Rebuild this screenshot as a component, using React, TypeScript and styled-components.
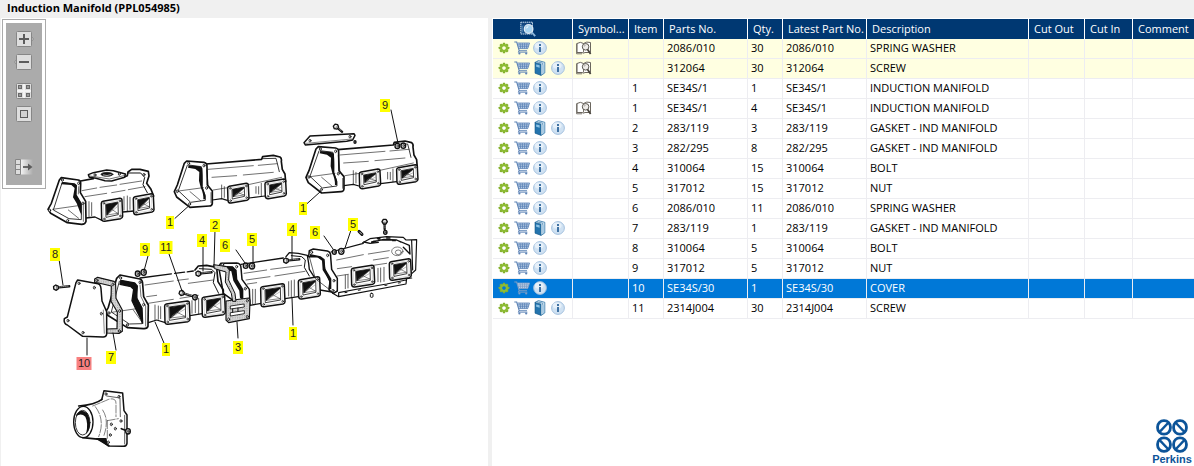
import React from 'react';
import styled, { createGlobalStyle, css } from 'styled-components';

const GlobalStyle = createGlobalStyle`
  * { box-sizing: border-box; }
  body {
    margin: 0;
    background: #f0f0f0;
    color: #000;
    font-family: "Open Sans", "Noto Sans", sans-serif;
    font-size: 11px;
  }
`;

const Page = styled.div`
  display: flex;
  flex-direction: column;
  min-height: 100vh;
`;

const TitleBar = styled.h1`
  margin: 0;
  padding-left: 7px;
  height: 18px;
  font-size: 11px;
  line-height: 16px;
  font-weight: 700;
`;

const Split = styled.main`
  flex: 1;
  display: grid;
  grid-template-columns: 487px minmax(0, 1fr);
  column-gap: 4px;
  padding-left: 1px;
`;

const DrawingPane = styled.section`
  display: flex;
  align-items: flex-start;
  background: #fff;
  padding-left: 1px;
`;

const ToolFrame = styled.div`
  flex: none;
  margin-top: 1px;
  padding: 3px;
  border: 1px solid #ababab;
  background: #fff;
`;

const Tools = styled.div`
  width: 36px;
  padding: 8px 0 10px;
  background: #ababab;
  display: flex;
  flex-direction: column;
  align-items: center;
  gap: 7px;
`;

const ToolButton = styled.button<{ $before?: number }>`
  display: block;
  border: 0;
  padding: 0;
  background: none;
  width: 20px;
  height: 16px;
  margin-top: ${(p) => p.$before ?? 0}px;
  svg { display: block; }
`;

const Drawing = styled.svg`
  display: block;
  flex: none;
  width: 442px;
  height: 448px;
  stroke-linejoin: round;
  stroke-linecap: round;
  font-family: "Liberation Sans", Arial, sans-serif;
`;

const ListPane = styled.section`
  background: #fff;
  padding: 1px 0 0 1px;
  display: flex;
  flex-direction: column;
  justify-content: space-between;
`;

const PartsTable = styled.table`
  width: 100%;
  table-layout: fixed;
  border-collapse: separate;
  border-spacing: 0;
`;

const Col = styled.col<{ $w?: number }>`
  width: ${(p) => (p.$w ? `${p.$w}px` : 'auto')};
`;

const HeadCell = styled.th`
  height: 20px;
  padding: 0 0 0 5px;
  background: #003872;
  color: #fff;
  font-weight: 400;
  text-align: left;
  line-height: 20px;
  white-space: nowrap;
  overflow: hidden;
  border-right: 1px solid #fff;
  &:last-child { border-right: 0; }
`;

const IconHeadCell = styled(HeadCell)`
  padding: 0 0 0 27px;
  svg { display: block; }
`;

const Cell = styled.td`
  height: 20px;
  padding: 0 0 0 3px;
  line-height: 18px;
  vertical-align: top;
  white-space: nowrap;
  overflow: hidden;
  border-right: 1px solid #ededf1;
  border-bottom: 1px solid #ededf1;
  &:last-child { border-right: 0; }
`;

const Row = styled.tr<{ $tone: 'plain' | 'marked' | 'selected' }>`
  ${(p) => p.$tone === 'marked' && css`background: #ffffe1;`}
  ${(p) => p.$tone === 'selected' && css`background: #0078d7; color: #fff;`}
`;

const ActionCell = styled(Cell)`
  padding-left: 2px;
`;

const Actions = styled.div`
  display: flex;
`;

const IconButton = styled.button`
  display: flex;
  align-items: center;
  justify-content: center;
  width: 18px;
  height: 18px;
  border: 0;
  padding: 0;
  background: none;
`;

const Brand = styled.footer`
  align-self: flex-end;
  width: 44px;
  padding-bottom: 1px;
  display: flex;
  flex-direction: column;
  align-items: center;
  color: #0c5499;
  font: 700 11px/12px "Liberation Sans", Arial, sans-serif;
`;

/* ---------- small icons ---------- */

const GearIcon = () => (
  <svg width="12" height="12" viewBox="-6 -6 12 12">
    {[0, 45, 90, 135, 180, 225, 270, 315].map((a) => (
      <rect key={a} x="-1.2" y="-5.3" width="2.4" height="2.4" rx="0.4" fill="#84b02c" transform={`rotate(${a})`} />
    ))}
    <circle r="2.9" fill="none" stroke="#8dbb33" strokeWidth="2.2" />
  </svg>
);

const CartIcon = ({ pale }: { pale?: boolean }) => {
  const ink = pale ? '#7d9dc4' : '#5b82b5';
  return (
    <svg width="16" height="14" viewBox="0 0 16 14" fill="none">
      <path d="M3.2 2h12.400l-1.900 5.600H4.900z" fill="#c3d6eb" />
      <path d="M3.400 2h12.200M4 3.900h11M4.500 5.700h10M4.900 7.600h9M6 2l.7 5.600M8.300 2l.3 5.600M10.700 2l-.2 5.600M13 2l-.7 5.600M15.600 2l-1.900 5.600" stroke={ink} strokeWidth="0.8" />
      <path d="M.3 1h2.400l2.500 8.700h7.800" stroke={ink} strokeWidth="1.1" />
      <path d="M5.200 9.700l-1 1.500h9.200" stroke={ink} strokeWidth="0.9" />
      <circle cx="5.400" cy="12.500" r="1.1" fill={ink} />
      <circle cx="12.200" cy="12.500" r="1.1" fill={ink} />
    </svg>
  );
};

const BookIcon = () => (
  <svg width="12" height="16" viewBox="0 0 12 16">
    <path d="M1 2.400L4.400 .6l6.400 1.700v10.600L7.200 15.400z" fill="#e4f0f8" stroke="#2f75a8" strokeWidth="0.8" />
    <path d="M3 1.800l5.800 1.400v2" fill="none" stroke="#2f75a8" strokeWidth="0.7" />
    <path d="M1 2.400l6 1.700v11.300L1 13.200z" fill="#2474ad" stroke="#155787" strokeWidth="0.6" />
    <path d="M2.200 4.400l3.400.9v2.400l-3.400-.9z" fill="#8cc3e6" />
    <path d="M9 5.200v8.600" stroke="#4b93c4" strokeWidth="0.8" />
  </svg>
);

const InfoIcon = () => (
  <svg width="14" height="14" viewBox="0 0 14 14">
    <circle cx="7" cy="7" r="6.400" fill="#cfe1f2" stroke="#9dbcdb" strokeWidth="0.9" />
    <ellipse cx="6.200" cy="4.600" rx="4.400" ry="3.200" fill="#e6f0f9" />
    <rect x="6" y="3" width="2" height="2" fill="#3f72a3" />
    <path d="M6 6h2v5H6z" fill="#3f72a3" />
  </svg>
);

const SymbolIcon = () => (
  <svg width="16" height="14" viewBox="0 0 16 14" fill="none">
    <path d="M1 2.500Q4.500 .2 7.500 2.500Q10.500 .2 14.500 1.500V11.500H9Q7.500 12.800 6 11.500H1z" fill="#fff" stroke="#6b665e" />
    <path d="M.6 2.500v10.300h5.400M7.500 2.500v9" stroke="#6b665e" strokeWidth="0.9" />
    <circle cx="9.600" cy="5.800" r="3.300" fill="#efedea" stroke="#5a564f" strokeWidth="1" />
    <path d="M8.200 5.600a1.600 1.600 0 0 1 1.500-1.500" stroke="#8a857c" strokeWidth="0.7" />
    <path d="M11.600 8.600l3 4.400" stroke="#47433c" strokeWidth="1.800" />
  </svg>
);

const SearchListIcon = () => (
  <svg width="16" height="16" viewBox="0 0 16 16" fill="none">
    <path d="M.8 1.200h11.700v11.800H.8z" fill="#1d568f" stroke="#c9d9e8" strokeDasharray="1.4 0.6" />
    <path d="M2 3h10" stroke="#0f3f73" strokeWidth="1.2" />
    <path d="M2.200 5.500v6" stroke="#8bb0d3" strokeDasharray="1 1" />
    <circle cx="8.600" cy="8" r="4.300" fill="#a9d4f0" stroke="#e2ecf4" strokeWidth="1.2" />
    <path d="M6.300 7.400a2.400 2.400 0 0 1 2-1.700" stroke="#fff" />
    <path d="M11.800 11.400l3.400 3.800" stroke="#8cb7dc" strokeWidth="1.800" />
  </svg>
);

const ToolFace = () => <rect x="2.5" y="0.5" width="15" height="15" rx="1" fill="#dedede" stroke="#868686" />;

const ZoomInIcon = () => (
  <svg width="20" height="16" viewBox="0 0 20 16" fill="none">
    <path d="M17 5l2.400 3L17 11" fill="#dedede" stroke="#868686" />
    <ToolFace />
    <path d="M10 3v10M5 8h10" stroke="#5c5c5c" strokeWidth="2" />
  </svg>
);

const ZoomOutIcon = () => (
  <svg width="20" height="16" viewBox="0 0 20 16" fill="none">
    <path d="M3 5L.6 8 3 11" fill="#dedede" stroke="#868686" />
    <ToolFace />
    <path d="M5 8h10" stroke="#5c5c5c" strokeWidth="2" />
  </svg>
);

const TilesIcon = () => (
  <svg width="20" height="16" viewBox="0 0 20 16">
    <ToolFace />
    <path d="M10 1v14M3 8h14" stroke="#f4f4f4" strokeWidth="2" />
    <g fill="#999" stroke="#6a6a6a">
      <rect x="4.5" y="2.5" width="3" height="3" />
      <rect x="12.5" y="2.5" width="3" height="3" />
      <rect x="4.5" y="10.5" width="3" height="3" />
      <rect x="12.5" y="10.5" width="3" height="3" />
    </g>
  </svg>
);

const FitIcon = () => (
  <svg width="20" height="16" viewBox="0 0 20 16">
    <ToolFace />
    <rect x="6.5" y="4.5" width="7" height="7" fill="#d2d2d2" stroke="#5c5c5c" />
  </svg>
);

const ExportIcon = () => (
  <svg width="20" height="16" viewBox="0 0 20 16" fill="none">
    <defs>
      <linearGradient id="fade">
        <stop offset="0" stopColor="#f2f2f2" />
        <stop offset="1" stopColor="#ababab" />
      </linearGradient>
    </defs>
    <path d="M7 .5h12v15H7z" fill="url(#fade)" />
    <path d="M1.5 .5h5v15h-5zM1.5 5.5h5M1.500 10.5h5" fill="#dcdcdc" stroke="#868686" />
    <path d="M9 8h6" stroke="#5c5c5c" strokeWidth="1.800" />
    <path d="M14 4.500L18.500 8 14 11.500z" fill="#5c5c5c" />
  </svg>
);

const PerkinsMark = () => (
  <svg width="32" height="34" viewBox="-16 -17 32 34" fill="none" stroke="#0c5499" strokeWidth="2.8">
    {[[1, 1], [-1, 1], [1, -1], [-1, -1]].map(([sx, sy]) => (
      <g key={`${sx}${sy}`} transform={`scale(${sx} ${sy})`}>
        <rect x="1.600" y="1.800" width="12.800" height="13.600" rx="6.200" />
        <path d="M3.500 13.500L12.800 3.700" strokeWidth="2.400" />
      </g>
    ))}
  </svg>
);

/* ---------- exploded view ---------- */

const INK = '#111';

type PortProps = { x: number; y: number; w?: number; h?: number };

const Port = ({ x, y, w = 62, h = 56 }: PortProps) => (
  <g transform={`translate(${x} ${y})`}>
    <path
      d={`M5 9L${w - 6} 0Q${w} 0 ${w} 6L${w + 2} ${h - 12}Q${w + 2} ${h - 7} ${w - 4} ${h - 5}L10 ${h + 3}Q2 ${h + 4} 1 ${h - 4}L0 15Q0 10 5 9Z`}
      fill="#fff" stroke={INK} strokeWidth="4.5"
    />
    <path d={`M7 14L${w - 6} 6L${w - 4} ${h - 10}L9 ${h - 2}Z`} fill="none" stroke="#aaa" strokeWidth="1.2" />
    <path d={`M14 18L${w - 12} 11L${w - 11} ${h - 17}L15 ${h - 9}Z`} fill="#fff" stroke={INK} strokeWidth="2.4" />
    <path d={`M16 20L${w - 14} 14L${w / 2} ${h / 2}L17 ${h - 17}Z`} fill={INK} />
    <path d={`M22 ${h - 22}L${w - 18} 20M20 ${h - 18}L${w - 14} 25`} stroke="#777" strokeWidth="1.5" />
    <path d={`M17 ${h - 16}L${w - 13} ${h - 21}M${w / 2} ${h / 2}L${w - 13} ${h - 21}`} stroke={INK} strokeWidth="1.5" />
    {[[8, 15], [w - 6, 8], [9, h - 4], [w - 5, h - 13]].map(([cx, cy]) => (
      <circle key={`${cx}-${cy}`} cx={cx} cy={cy} r="2.5" fill="#fff" stroke={INK} strokeWidth="2" />
    ))}
  </g>
);

const Hole = ({ x, y }: { x: number; y: number }) => (
  <ellipse cx={x} cy={y} rx="3" ry="4" fill="#fff" stroke={INK} strokeWidth="2.5" />
);

const Bolt = ({ x, y, len = 38, angle = 0 }: { x: number; y: number; len?: number; angle?: number }) => (
  <g transform={`translate(${x} ${y}) rotate(${angle})`} stroke={INK}>
    <path d={`M8 0H${len}`} strokeWidth="7" />
    <path d={`M10 -1H${len - 2}`} stroke="#bbb" strokeWidth="2" strokeDasharray="3 3" />
    <path d="M-7 -4L0 -8L7 -4V4L0 8L-7 4Z" fill="#e8e8e8" strokeWidth="4" />
    <path d="M2 -7V7" strokeWidth="1.5" />
  </g>
);

const Washer = ({ x, y, r = 8 }: { x: number; y: number; r?: number }) => (
  <g fill="#ddd" stroke={INK}>
    <ellipse cx={x} cy={y} rx={r} ry={r + 1} strokeWidth="4" />
    <ellipse cx={x + 1} cy={y} rx={r / 3} ry={r / 2} strokeWidth="2" />
  </g>
);

const LongManifold = () => (
  <g fill="none" stroke={INK} strokeWidth="4">
    <path d="M498 222L665 208L668 199L700 196L720 201Q726 205 724 214L727 238L735 252L739 280L675 320L545 328L516 332Z" fill="#fff" stroke="none" />
    <path d="M498 222L665 208L668 200L700 196L720 201Q726 205 724 214L727 238L735 252L737 275" strokeWidth="5" />
    <path d="M668 206L708 205L712 220L718 245" strokeWidth="2.5" />
    <path d="M505 238L640 227M655 226L712 221M516 262L590 257M610 255L700 247M520 300L570 292M625 284L725 262" strokeWidth="1.8" />
    <path d="M545 285V326M553 290V322M648 290V310M656 290V312M664 280V318" strokeWidth="2" />
    <path d="M517 330L545 326L562 331M627 324L675 318" strokeWidth="3.5" />
    <path d="M440 213L492 217Q502 219 501 230L502 285L517 303V340Q516 348 508 348L450 352L410 321L403 305L412 285L433 220Z" fill="#fff" strokeWidth="5" />
    <path d="M446 225L484 230Q488 250 486 290L496 318V331L452 337L415 302L442 226" strokeWidth="2.5" />
    <path d="M446 226L478 229L487 234L488 292L496 314V328L490 328Q491 312 482 292L477 272L478 246L466 237L444 233Z" fill={INK} stroke="none" />
    <path d="M416 303L490 293M450 305L482 332M500 240L505 290M513 308V338" strokeWidth="1.8" />
    <Hole x={446} y={220} /><Hole x={492} y={227} /><Hole x={412} y={304} /><Hole x={449} y={342} /><Hole x={500} y={294} />
    <Port x={563} y={280} w={62} h={56} />
    <Port x={675} y={267} w={62} h={56} />
    <path d="M445 349L405 385" strokeWidth="3" />
  </g>
);

const BossManifold = () => (
  <g fill="none" stroke={INK} strokeWidth="4">
    <path d="M122 273L150 266L262 250L270 238L325 246L330 290L342 320L284 365L185 385L137 385Z" fill="#fff" stroke="none" />
    <path d="M122 273L160 266M250 262L262 257L264 246L275 238L300 238L325 244L327 258L320 280L333 298L341 318" strokeWidth="5" />
    <path d="M266 249L302 249L314 262L309 284L322 308" strokeWidth="3" />
    <path d="M126 302L170 294M180 292L230 285M240 283L305 273M135 320L200 310M215 308L255 301M265 299L315 290" strokeWidth="1.8" />
    <path d="M147 335V380M155 338V377M252 320V360M262 318V364M270 322V358" strokeWidth="2" />
    <path d="M138 384L165 381L186 391M248 366L282 363" strokeWidth="4" />
    <path d="M145 254L160 248L200 240L220 242L256 252L254 262L215 273L195 272L168 265L148 262Z" fill="#fff" strokeWidth="4.5" />
    <ellipse cx="201" cy="253" rx="18" ry="6" fill={INK} strokeWidth="2" />
    <path d="M190 255Q201 259 213 254" stroke="#fff" strokeWidth="2" />
    <path d="M148 258L170 261L208 267L252 257" strokeWidth="1.8" />
    <Hole x={312} y={254} /><Hole x={165} y={255} /><Hole x={238} y={252} />
    <path d="M64 263L115 270Q123 272 122 282L121 308L137 334L138 394Q136 403 125 403L82 398L32 370L24 358L34 340L58 270Z" fill="#fff" strokeWidth="5" />
    <path d="M68 277L106 284L107 315L124 342V389L87 386L40 360L66 279" strokeWidth="2.5" />
    <path d="M66 276L104 280L111 286L110 314L125 340V376L120 366L110 340L99 322L104 294L94 285L64 283Z" fill={INK} stroke="none" />
    <path d="M38 358L115 347M85 360L116 385M130 340V394M116 290L115 312" strokeWidth="1.8" />
    <Hole x={67} y={270} /><Hole x={116} y={280} /><Hole x={29} y={361} /><Hole x={83} y={392} /><Hole x={129} y={340} />
    <Port x={184} y={325} w={62} h={66} />
    <Port x={280} y={311} w={60} h={60} />
  </g>
);

const CoverAndFirstManifold = () => (
  <g fill="none" stroke={INK} strokeWidth="4">
    {/* body of the first manifold */}
    <path d="M300 144L460 123" strokeWidth="4" strokeDasharray="95 10 30 8" />
    <path d="M465 120L475 108L500 106L530 112L534 155L550 180V195" strokeWidth="5" />
    <path d="M478 116L515 118L525 128L520 158L536 190" strokeWidth="3" />
    <path d="M315 165L400 153M412 151L445 147M325 220L400 208M420 205L475 196M320 200L350 196M445 160L520 150" strokeWidth="1.8" />
    <path d="M345 225V270M355 228V268M362 230V266M456 212V250M466 210V248M476 205V252" strokeWidth="2" />
    <path d="M325 278L350 270L376 278M450 257L487 251" strokeWidth="3.5" />
    {/* flange */}
    <path d="M240 135L300 147Q308 150 308 162L311 200L325 225L324 289Q322 297 310 296L262 293L203 256L197 246L205 232L230 145Z" fill="#fff" strokeWidth="5" />
    <path d="M241 152L286 161L291 205L305 235L306 281L268 282L214 246L238 154" strokeWidth="2.5" />
    <path d="M243 151L284 159L292 168L290 204L306 234L308 280L303 268L290 242L276 212L281 178L273 170L240 163Z" fill={INK} />
    <path d="M215 247L290 236M280 240L305 275M300 165L303 200L317 228V288" strokeWidth="1.8" />
    <Hole x={242} y={144} /><Hole x={300} y={157} /><Hole x={207} y={249} /><Hole x={262} y={285} /><Hole x={311} y={224} />
    {/* end gasket */}
    <path d="M164 147L173 142L222 154Q228 158 227 168L228 205L247 240V304L238 310L200 309V297L231 296L232 246L213 214L214 168L176 159L164 158Z" fill="url(#speckle)" strokeWidth="3.5" />
    <Hole x={171} y={151} /><Hole x={219} y={163} /><Hole x={239} y={243} /><Hole x={238} y={303} />
    {/* cover plate */}
    <path d="M113 150L174 161Q182 163 183 176L186 213L200 245V313Q198 322 188 321L128 319L82 285Q70 281 73 266L82 261L108 158Z" fill="#fff" strokeWidth="4.5" />
    <path d="M190 240L193 310" strokeWidth="1.5" />
    <Hole x={117} y={160} /><Hole x={163} y={173} /><Hole x={84} y={272} /><Hole x={129} y={308} /><Hole x={184} y={251} />
    <Port x={374} y={213} w={74} h={67} />
    <Port x={486} y={193} w={68} h={66} />
    <Bolt x={48} y={173} len={40} angle={-6} />
    <Washer x={293} y={131} r={7} /><Washer x={311} y={127} r={8} />
    <Bolt x={425} y={189} len={36} angle={16} /><Washer x={465} y={202} r={7} />
    <Bolt x={475} y={131} len={40} angle={-6} />
    {/* joint gasket between first and second manifold */}
    <path d="M522 104L560 110L568 120L566 150L585 190L588 214L578 214L574 190L556 156L558 126L524 116Z" fill="url(#speckle)" strokeWidth="3" />
  </g>
);

const RearManifolds = () => (
  <g fill="none" stroke={INK} strokeWidth="4">
    {/* second manifold */}
    <path d="M33 160L165 142L178 128L235 133L243 180L262 210L205 262L60 286Z" fill="#fff" stroke="none" />
    <path d="M33 163L160 144M168 140L178 128L205 130L232 136L236 160L238 178L252 200" strokeWidth="4" />
    <path d="M184 137L215 140L226 150L223 172L238 198" strokeWidth="3" />
    <path d="M42 190L110 180M122 178L215 166M48 210L120 200M135 198L225 184M52 222L80 218" strokeWidth="1.8" />
    <path d="M68 238V282M76 238V280M176 215V258M184 212V260M193 210V258" strokeWidth="2" />
    <path d="M60 286L94 280M165 266L205 260M270 240L306 246" strokeWidth="4" />
    <path d="M-28 160L20 159Q33 160 33 174L36 208L58 238L60 284L46 290L30 286L-20 250L-34 170Z" fill="#fff" strokeWidth="4.5" />
    <path d="M-22 168L10 172L15 205L34 240V270" strokeWidth="2.5" />
    <path d="M-24 168L8 169L20 180L22 208L40 238V268L30 264L28 242L10 212L4 184L-22 176Z" fill={INK} stroke="none" />
    <Hole x={20} y={170} /><Hole x={46} y={236} /><Hole x={-22} y={164} />
    <Port x={92} y={221} w={71} h={66} />
    <Port x={205} y={200} w={64} h={64} />
    {/* intermediate gasket, part 3 */}
    <path d="M-12 273L56 264Q60 266 60 272L58 326L-4 338L-12 330Z" fill="url(#speckle)" strokeWidth="3.5" />
    <path d="M2 288L42 282L43 291L2 297ZM2 308L43 302V311L2 318Z" fill="#fff" strokeWidth="2.5" />
    <path d="M8 297V307M24 294V304" strokeWidth="3" />
    <Hole x={52} y={272} /><Hole x={52} y={320} /><Hole x={-4} y={328} />
    {/* third manifold */}
    <path d="M300 128L400 98L415 88L470 80L520 84L560 90L556 182L530 218L326 258L305 248Z" fill="#fff" stroke="none" />
    <path d="M303 126L400 100M398 98L420 86L470 80L520 82L528 90L560 89L557 180L546 190M545 92L548 180" strokeWidth="3.5" />
    <path d="M402 96L420 100L445 97M445 90L500 90L538 106L540 132L520 112M425 96L462 88L500 90L512 96" strokeWidth="4" />
    <path d="M442 86H450M470 84H480M488 92H496M430 94H436" strokeWidth="4" />
    <ellipse cx="502" cy="124" rx="17" ry="13" strokeWidth="1.6" />
    <ellipse cx="505" cy="127" rx="9" ry="7" strokeWidth="1.6" />
    <path d="M320 150L400 134M415 132L478 122M322 176L365 170M322 198L355 193M430 150L475 143M430 166L470 160" strokeWidth="1.8" />
    <path d="M346 195V236M354 195V234M444 175V215M452 174V216M462 172V214" strokeWidth="2" />
    <path d="M308 250L326 260L528 222L530 206L545 204M326 248L400 234L470 222L528 210M326 248V260" strokeWidth="3.5" />
    {[345, 385, 465, 505].map((x) => <path key={x} d={`M${x} ${310 - x * 0.18}l6 -1`} strokeWidth="3" />)}
    <path d="M238 122L250 117L292 123Q303 126 302 140L305 178L322 205V243L310 250L297 240L300 215L284 178L280 150L262 140L236 140Z" fill="#fff" strokeWidth="4.5" />
    <path d="M240 132L272 139L284 148L286 176L304 206V238L296 236L298 212L278 180L276 152L264 142L240 138Z" fill={INK} stroke="none" />
    <path d="M238 140L256 206L300 240" strokeWidth="2" />
    <Hole x={245} y={127} /><Hole x={293} y={136} /><Hole x={312} y={212} /><Hole x={309} y={242} />
    <Port x={364} y={166} w={68} h={62} />
    <Port x={478} y={146} w={64} h={62} />
    {/* fixings */}
    <Washer x={47} y={167} r={7} /><Washer x={66} y={168} r={8} />
    <Bolt x={168} y={152} len={40} angle={-6} />
    <Washer x={313} y={126} r={6} /><Washer x={334} y={124} r={8} />
    <Bolt x={464} y={35} len={22} angle={90} /><Washer x={466} y={67} r={5} />
    <path d="M387 64L396 73" strokeWidth="9" />
    <path d="M389 66L395 72" stroke="#ccc" strokeWidth="3" />
    <rect x="421" y="250" width="8" height="12" rx="3" strokeWidth="3" />
  </g>
);

const Outlet = () => (
  <g fill="none" stroke={INK} strokeWidth="4">
    <path d="M162 62L218 69L222 122L231 135V220Q230 229 220 229L178 228L150 205L155 90Z" fill="#fff" strokeWidth="4.5" />
    <path d="M170 78L210 84L211 140M224 136V222" strokeWidth="2" />
    <path d="M90 106Q135 104 152 92Q176 78 198 90L200 145L172 152L168 205L152 212L98 202Z" fill="#fff" stroke="none" />
    <path d="M86 108Q135 104 156 88M98 203L150 208L176 228" strokeWidth="5" />
    <path d="M140 206L170 224L168 206Z" fill={INK} />
    <path d="M128 108Q160 95 176 88Q198 82 198 100V140M172 152L205 146M172 152V205M136 110Q166 150 146 200M158 120Q178 150 162 196" strokeWidth="1.6" strokeDasharray="24 5" />
    <ellipse cx="100" cy="156" rx="29" ry="47" fill="#fff" strokeWidth="4" />
    <ellipse cx="98" cy="158" rx="22" ry="37" strokeWidth="2.5" />
    <path d="M78 136Q92 112 112 130Q120 144 120 160Q120 180 108 192Q116 160 106 140Q94 128 78 138Z" fill={INK} stroke="none" />
    <Hole x={168} y={72} /><Hole x={207} y={80} /><Hole x={184} y={163} /><Hole x={196} y={176} /><Hole x={181} y={195} /><Hole x={213} y={153} /><Hole x={175} y={217} />
    <path d="M214 176L230 182" strokeWidth="5" />
    <Washer x={234} y={184} r={7} />
  </g>
);

const leaders = [
  'M59 259L63 285', 'M148 256L144 271', 'M169 254L182 291', 'M203 246L203 271', 'M215 230L214 266',
  'M236 250L245 263', 'M253 245V262', 'M292 235V260', 'M324 236L333 249', 'M351 230L345 248',
  'M391 110L398 143', 'M237 322L238 338', 'M292 298L293 325', 'M155 322L164 343', 'M113 333L116 350', 'M87 338V355',
];

const callouts: [string, number, number][] = [
  ['9', 385, 105], ['1', 170, 222], ['1', 303, 208], ['2', 215, 225], ['8', 55, 254], ['9', 145, 249],
  ['11', 166, 247], ['4', 202, 240], ['6', 225, 245], ['5', 252, 239], ['4', 292, 229], ['6', 315, 232],
  ['5', 353, 224], ['1', 166, 349], ['7', 111, 357], ['10', 84, 363], ['3', 238, 347], ['1', 293, 333],
];

const Callout = ({ text, x, y }: { text: string; x: number; y: number }) => {
  const w = text === '10' ? 15 : text === '11' ? 13 : text === '1' ? 8 : 10;
  return (
    <g>
      <rect x={x - w / 2} y={y - 6} width={w} height="13" fill={text === '10' ? '#f88080' : '#ffff00'} />
      <text x={x} y={y + 4} fontSize="11" textAnchor="middle" fill="#222">{text}</text>
    </g>
  );
};

const ExplodedView = () => (
  <Drawing viewBox="46 18 442 448" role="img" aria-label="Induction Manifold">
    <defs>
      <pattern id="speckle" width="7" height="7" patternUnits="userSpaceOnUse">
        <rect width="7" height="7" fill="#e0e0e0" />
        <circle cx="2" cy="2" r="1.4" fill="#555" />
        <circle cx="5" cy="5" r="1.1" fill="#888" />
      </pattern>
    </defs>
    <g transform="translate(40 90) scale(0.3333)">
      <BossManifold />
      <LongManifold />
      <g transform="translate(395 -43)"><LongManifold /></g>
    </g>
    <g transform="translate(230 90) scale(0.3333)" stroke={INK} fill="none">
      <path d="M240 138L372 131L375 136L368 150L350 154L226 165L222 158Z" fill="#fff" strokeWidth="4.5" />
      <path d="M228 160L366 147" strokeWidth="1.5" />
      <Hole x={240} y={152} /><Hole x={360} y={140} />
      <Bolt x={318} y={110} len={24} angle={40} />
      <Washer x={375} y={156} r={3} />
      <Washer x={502} y={168} r={7} /><Washer x={520} y={167} r={7} />
    </g>
    <g transform="translate(230 210) scale(0.3333)"><RearManifolds /></g>
    <g transform="translate(40 230) scale(0.3333)"><CoverAndFirstManifold /></g>
    <g transform="translate(50 370) scale(0.3333)"><Outlet /></g>
    {leaders.map((d) => <path key={d} d={d} stroke={INK} fill="none" />)}
    {callouts.map(([t, x, y]) => <Callout key={`${t}-${x}`} text={t} x={x} y={y} />)}
  </Drawing>
);

/* ---------- parts list ---------- */

type Part = {
  item: string; no: string; qty: string; name: string;
  book?: boolean; symbol?: boolean; tone?: 'marked' | 'selected';
};

const parts: Part[] = [
  { item: '', no: '2086/010', qty: '30', name: 'SPRING WASHER', symbol: true, tone: 'marked' },
  { item: '', no: '312064', qty: '30', name: 'SCREW', book: true, symbol: true, tone: 'marked' },
  { item: '1', no: 'SE34S/1', qty: '1', name: 'INDUCTION MANIFOLD' },
  { item: '1', no: 'SE34S/1', qty: '4', name: 'INDUCTION MANIFOLD', symbol: true },
  { item: '2', no: '283/119', qty: '3', name: 'GASKET - IND MANIFOLD', book: true },
  { item: '3', no: '282/295', qty: '8', name: 'GASKET - IND MANIFOLD' },
  { item: '4', no: '310064', qty: '15', name: 'BOLT' },
  { item: '5', no: '317012', qty: '15', name: 'NUT' },
  { item: '6', no: '2086/010', qty: '11', name: 'SPRING WASHER' },
  { item: '7', no: '283/119', qty: '1', name: 'GASKET - IND MANIFOLD', book: true },
  { item: '8', no: '310064', qty: '5', name: 'BOLT' },
  { item: '9', no: '317012', qty: '5', name: 'NUT' },
  { item: '10', no: 'SE34S/30', qty: '1', name: 'COVER', tone: 'selected' },
  { item: '11', no: '2314J004', qty: '30', name: 'SCREW', book: true },
];

const columnWidths = [80, 56, 35, 84, 35, 84, 162, 56, 48, undefined];
const headings = ['Symbol...', 'Item', 'Parts No.', 'Qty.', 'Latest Part No.', 'Description', 'Cut Out', 'Cut In', 'Comment'];

const PartRow = ({ part }: { part: Part }) => (
  <Row $tone={part.tone ?? 'plain'} aria-selected={part.tone === 'selected'}>
    <ActionCell>
      <Actions>
        <IconButton aria-label="Options"><GearIcon /></IconButton>
        <IconButton aria-label="Add to cart"><CartIcon pale={part.tone === 'selected'} /></IconButton>
        {part.book && <IconButton aria-label="Catalogue"><BookIcon /></IconButton>}
        <IconButton aria-label="Information"><InfoIcon /></IconButton>
      </Actions>
    </ActionCell>
    <ActionCell>{part.symbol && <IconButton aria-label="Show symbol"><SymbolIcon /></IconButton>}</ActionCell>
    <Cell>{part.item}</Cell>
    <Cell>{part.no}</Cell>
    <Cell>{part.qty}</Cell>
    <Cell>{part.no}</Cell>
    <Cell>{part.name}</Cell>
    <Cell />
    <Cell />
    <Cell />
  </Row>
);

export default function App() {
  return (
    <Page>
      <GlobalStyle />
      <TitleBar>Induction Manifold (PPL054985)</TitleBar>
      <Split>
        <DrawingPane>
          <ToolFrame>
            <Tools>
              <ToolButton aria-label="Zoom in"><ZoomInIcon /></ToolButton>
              <ToolButton aria-label="Zoom out"><ZoomOutIcon /></ToolButton>
              <ToolButton aria-label="Tiles" $before={6}><TilesIcon /></ToolButton>
              <ToolButton aria-label="Fit to window"><FitIcon /></ToolButton>
              <ToolButton aria-label="Move panel" $before={30}><ExportIcon /></ToolButton>
            </Tools>
          </ToolFrame>
          <ExplodedView />
        </DrawingPane>
        <ListPane>
          <PartsTable>
            <colgroup>
              {columnWidths.map((w, i) => <Col key={i} $w={w} />)}
            </colgroup>
            <thead>
              <tr>
                <IconHeadCell aria-label="Actions"><SearchListIcon /></IconHeadCell>
                {headings.map((h) => <HeadCell key={h}>{h}</HeadCell>)}
              </tr>
            </thead>
            <tbody>
              {parts.map((p, i) => <PartRow key={i} part={p} />)}
            </tbody>
          </PartsTable>
          <Brand>
            <PerkinsMark />
            Perkins
          </Brand>
        </ListPane>
      </Split>
    </Page>
  );
}
